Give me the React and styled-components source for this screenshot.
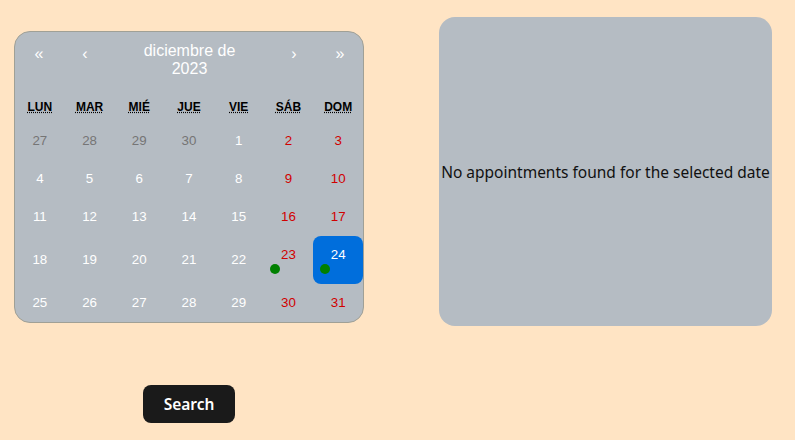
import React from 'react';
import styled, { createGlobalStyle } from 'styled-components';

const GlobalStyle = createGlobalStyle`
  body {
    margin: 0;
    background-color: bisque;
    font-family: "Noto Sans", sans-serif;
  }
`;

const Page = styled.div`
  display: flex;
  align-items: flex-start;
  padding: 17px 0 0 14px;
`;

const LeftColumn = styled.div`
  display: flex;
  flex-direction: column;
  align-items: center;
  width: 350px;
  margin-top: 14px;
`;

const Calendar = styled.div`
  width: 350px;
  box-sizing: border-box;
  background-color: #b5bcc3;
  border: 1px solid #a0a096;
  border-radius: 16px;
  font-family: "Liberation Sans", Arial, sans-serif;
  line-height: 1.125em;
  overflow: hidden;
`;

const Nav = styled.div`
  display: flex;
  height: 44px;
  margin-bottom: 14px;
`;

const NavArrow = styled.button`
  flex: 0 0 46px;
  background: none;
  border: 0;
  margin: 0 0 0 ${p => p.$first ? '1px' : '0'};
  color: #fff;
  font-family: inherit;
  font-size: 16px;
  padding: 0;
`;

const NavLabel = styled.button`
  flex: 1;
  background: none;
  border: 0;
  color: #fff;
  font-family: inherit;
  font-size: 16px;
  line-height: 18px;
  padding: 10px 30px 0;
  align-self: flex-start;
`;

const WeekRow = styled.div`
  display: grid;
  grid-template-columns: repeat(7, 1fr);
  text-align: center;
  text-transform: uppercase;
  font-weight: bold;
  font-size: 12px;
`;

const WeekDay = styled.div`
  padding: 8px 0 6px;
  abbr {
    text-decoration: underline dotted;
    color: #000;
  }
`;

const DaysGrid = styled.div`
  display: grid;
  grid-template-columns: repeat(7, 1fr);
`;

const Tile = styled.button`
  background: ${p => p.$active ? '#006edc' : 'none'};
  border: 0;
  border-radius: 8px;
  margin: 0;
  padding: 10px 6.6667px;
  font-family: inherit;
  font-size: 13.33px;
  line-height: 18px;
  text-align: center;
  color: ${p => p.$active ? '#fff' : p.$neighbor ? '#757575' : p.$weekend ? '#d10000' : '#fff'};
`;

const Dot = styled.div`
  width: 10px;
  height: 10px;
  border-radius: 50%;
  background-color: green;
`;

const SearchButton = styled.button`
  margin-top: 62px;
  height: 38px;
  padding: 0 20.5px;
  border: 0;
  border-radius: 8px;
  background-color: #1a1a1a;
  color: #fff;
  font-family: "Noto Sans", sans-serif;
  font-size: 15.5px;
  font-weight: 600;
`;

const Panel = styled.div`
  margin-left: 75px;
  width: 333px;
  height: 309px;
  background-color: #b5bcc3;
  border-radius: 16px;
  display: flex;
  align-items: center;
  justify-content: center;
  color: #111;
  font-size: 15.5px;
  white-space: nowrap;
`;

const weekdays = [
  ['lunes', 'lun'], ['martes', 'mar'], ['miércoles', 'mié'], ['jueves', 'jue'],
  ['viernes', 'vie'], ['sábado', 'sáb'], ['domingo', 'dom'],
];

const days = [];
[27, 28, 29, 30].forEach(d => days.push({ d, neighbor: true }));
for (let d = 1; d <= 31; d++) days.push({ d });

const withDots = [23, 24];

export default function App() {
  return (
    <>
      <GlobalStyle />
      <Page>
        <LeftColumn>
          <Calendar>
            <Nav>
              <NavArrow $first>«</NavArrow>
              <NavArrow>‹</NavArrow>
              <NavLabel>diciembre de 2023</NavLabel>
              <NavArrow>›</NavArrow>
              <NavArrow>»</NavArrow>
            </Nav>
            <WeekRow>
              {weekdays.map(([full, short]) => (
                <WeekDay key={full}><abbr title={full}>{short}</abbr></WeekDay>
              ))}
            </WeekRow>
            <DaysGrid>
              {days.map((t, i) => {
                const weekend = i % 7 >= 5;
                const dot = !t.neighbor && withDots.includes(t.d);
                return (
                  <Tile
                    key={i}
                    $neighbor={t.neighbor}
                    $weekend={weekend}
                    $active={!t.neighbor && t.d === 24}
                  >
                    <abbr>{t.d}</abbr>
                    {dot && <Dot />}
                  </Tile>
                );
              })}
            </DaysGrid>
          </Calendar>
          <SearchButton>Search</SearchButton>
        </LeftColumn>
        <Panel>No appointments found for the selected date</Panel>
      </Page>
    </>
  );
}
